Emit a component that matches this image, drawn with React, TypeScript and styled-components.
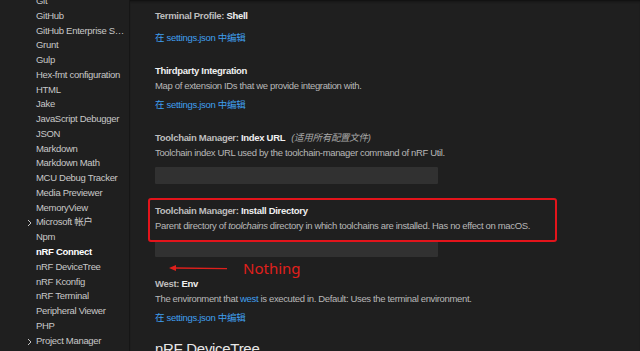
import React from 'react';
import styled, { createGlobalStyle } from 'styled-components';

const GlobalStyle = createGlobalStyle`
  html, body {
    margin: 0;
    padding: 0;
    background: #1f1f1f;
    overflow: hidden;
  }
  body {
    font-family: "Liberation Sans", "Noto Sans CJK SC", sans-serif;
  }
`;

const Layout = styled.div`
  display: flex;
  width: 640px;
  height: 351px;
  overflow: hidden;
  background: #1f1f1f;
`;

const Sidebar = styled.div`
  width: 129px;
  flex-shrink: 0;
  border-right: 1px solid #161616;
  overflow: hidden;
`;

const TocList = styled.ul`
  list-style: none;
  margin: -6px 0 0;
  padding: 0;
`;

const TocItem = styled.li<{ active?: boolean }>`
  position: relative;
  height: 14.77px;
  line-height: 14.77px;
  padding-left: 36px;
  padding-right: 3px;
  font-size: 9.5px;
  letter-spacing: -0.3px;
  white-space: nowrap;
  overflow: hidden;
  text-overflow: ellipsis;
  color: ${p => (p.active ? '#ffffff' : '#c8c8c8')};
  font-weight: ${p => (p.active ? 700 : 400)};
`;

const Chevron = styled.svg`
  position: absolute;
  left: 26px;
  top: 4px;
`;

const Main = styled.div`
  flex: 1;
  padding-left: 25px;
  box-shadow: inset 0 3px 3px -2px #0c0c0c;
  border-top: 1px solid #2a2a2a;
  margin-top: -1px;
  overflow: hidden;
`;

const Setting = styled.div<{ spaced?: boolean }>`
  position: relative;
  padding: 8px 0 ${p => (p.spaced ? 11 : 9)}px;
`;

const Title = styled.div`
  font-size: 9.5px;
  line-height: 16px;
  letter-spacing: -0.3px;
  color: #bdbdbd;
  font-weight: 700;
  white-space: nowrap;
`;

const Key = styled.span`
  color: #f0f0f0;
  font-weight: 700;
`;

const Scope = styled.span`
  margin-left: 6px;
  font-style: italic;
  font-weight: 400;
  color: #a8a8a8;
`;

const Desc = styled.div`
  margin-top: -1px;
  font-size: 9.5px;
  line-height: 16px;
  letter-spacing: -0.35px;
  color: #b8b8b8;
  white-space: nowrap;
`;

const Link = styled.a<{ gap?: number }>`
  display: block;
  margin-top: ${p => p.gap ?? 3}px;
  font-size: 9.5px;
  line-height: 16px;
  letter-spacing: -0.3px;
  color: #3f9fef;
  text-decoration: none;
  white-space: nowrap;
`;

const InlineLink = styled.span`
  color: #3f9fef;
`;

const Input = styled.div`
  margin-top: 6px;
  width: 283px;
  height: 17px;
  background: #313131;
  border-radius: 1px;
`;

const Highlight = styled.div`
  position: absolute;
  top: 3px;
  left: -7px;
  width: 409px;
  height: 44px;
  box-sizing: border-box;
  border: 2px solid #e3141b;
  border-radius: 3px;
  pointer-events: none;
`;

const Note = styled.div`
  position: absolute;
  top: 64px;
  left: 13px;
  display: flex;
  align-items: center;
  gap: 15px;
`;

const NoteText = styled.span`
  font-family: "Noto Sans", sans-serif;
  font-size: 15px;
  line-height: 18px;
  color: #e0201c;
`;

const SectionHeading = styled.h2`
  margin: 2px 0 0;
  font-size: 15px;
  line-height: 24px;
  letter-spacing: -0.3px;
  font-weight: 400;
  color: #e8e8e8;
  white-space: nowrap;
`;

const tocItems: { label: string; active?: boolean; group?: boolean }[] = [
  { label: 'Git' },
  { label: 'GitHub' },
  { label: 'GitHub Enterprise Server' },
  { label: 'Grunt' },
  { label: 'Gulp' },
  { label: 'Hex-fmt configuration' },
  { label: 'HTML' },
  { label: 'Jake' },
  { label: 'JavaScript Debugger' },
  { label: 'JSON' },
  { label: 'Markdown' },
  { label: 'Markdown Math' },
  { label: 'MCU Debug Tracker' },
  { label: 'Media Previewer' },
  { label: 'MemoryView' },
  { label: 'Microsoft 帐户', group: true },
  { label: 'Npm' },
  { label: 'nRF Connect', active: true },
  { label: 'nRF DeviceTree' },
  { label: 'nRF Kconfig' },
  { label: 'nRF Terminal' },
  { label: 'Peripheral Viewer' },
  { label: 'PHP' },
  { label: 'Project Manager', group: true },
];

const EDIT_LINK = '在 settings.json 中编辑';

const App: React.FC = () => {
  return (
    <>
      <GlobalStyle />
      <Layout>
        <Sidebar>
          <TocList>
            {tocItems.map(item => (
              <TocItem key={item.label} active={item.active}>
                {item.group && (
                  <Chevron width="7" height="8" viewBox="0 0 7 8">
                    <path d="M2 1 L5 4 L2 7" fill="none" stroke="#c4c4c4" strokeWidth="1" />
                  </Chevron>
                )}
                {item.label}
              </TocItem>
            ))}
          </TocList>
        </Sidebar>

        <Main>
          <Setting>
            <Title>
              Terminal Profile: <Key>Shell</Key>
            </Title>
            <Link gap={6}>{EDIT_LINK}</Link>
          </Setting>

          <Setting>
            <Title>
              <Key>Thirdparty Integration</Key>
            </Title>
            <Desc>Map of extension IDs that we provide integration with.</Desc>
            <Link>{EDIT_LINK}</Link>
          </Setting>

          <Setting spaced>
            <Title>
              Toolchain Manager: <Key>Index URL</Key>
              <Scope>(适用所有配置文件)</Scope>
            </Title>
            <Desc>Toolchain index URL used by the toolchain-manager command of nRF Util.</Desc>
            <Input />
          </Setting>

          <Setting spaced>
            <Highlight />
            <Title>
              Toolchain Manager: <Key>Install Directory</Key>
            </Title>
            <Desc>
              Parent directory of <i>toolchains</i> directory in which toolchains are installed. Has no effect on macOS.
            </Desc>
            <Input />
            <Note>
              <svg width="60" height="8" viewBox="0 0 60 8">
                <path d="M1 4 L8 1 L8 7 Z" fill="#e0201c" />
                <line x1="7" y1="4" x2="59" y2="4.6" stroke="#e0201c" strokeWidth="1.3" />
              </svg>
              <NoteText>Nothing</NoteText>
            </Note>
          </Setting>

          <Setting>
            <Title>
              West: <Key>Env</Key>
            </Title>
            <Desc>
              The environment that <InlineLink>west</InlineLink> is executed in. Default: Uses the terminal environment.
            </Desc>
            <Link>{EDIT_LINK}</Link>
          </Setting>

          <SectionHeading>nRF DeviceTree</SectionHeading>
        </Main>
      </Layout>
    </>
  );
};

export default App;
